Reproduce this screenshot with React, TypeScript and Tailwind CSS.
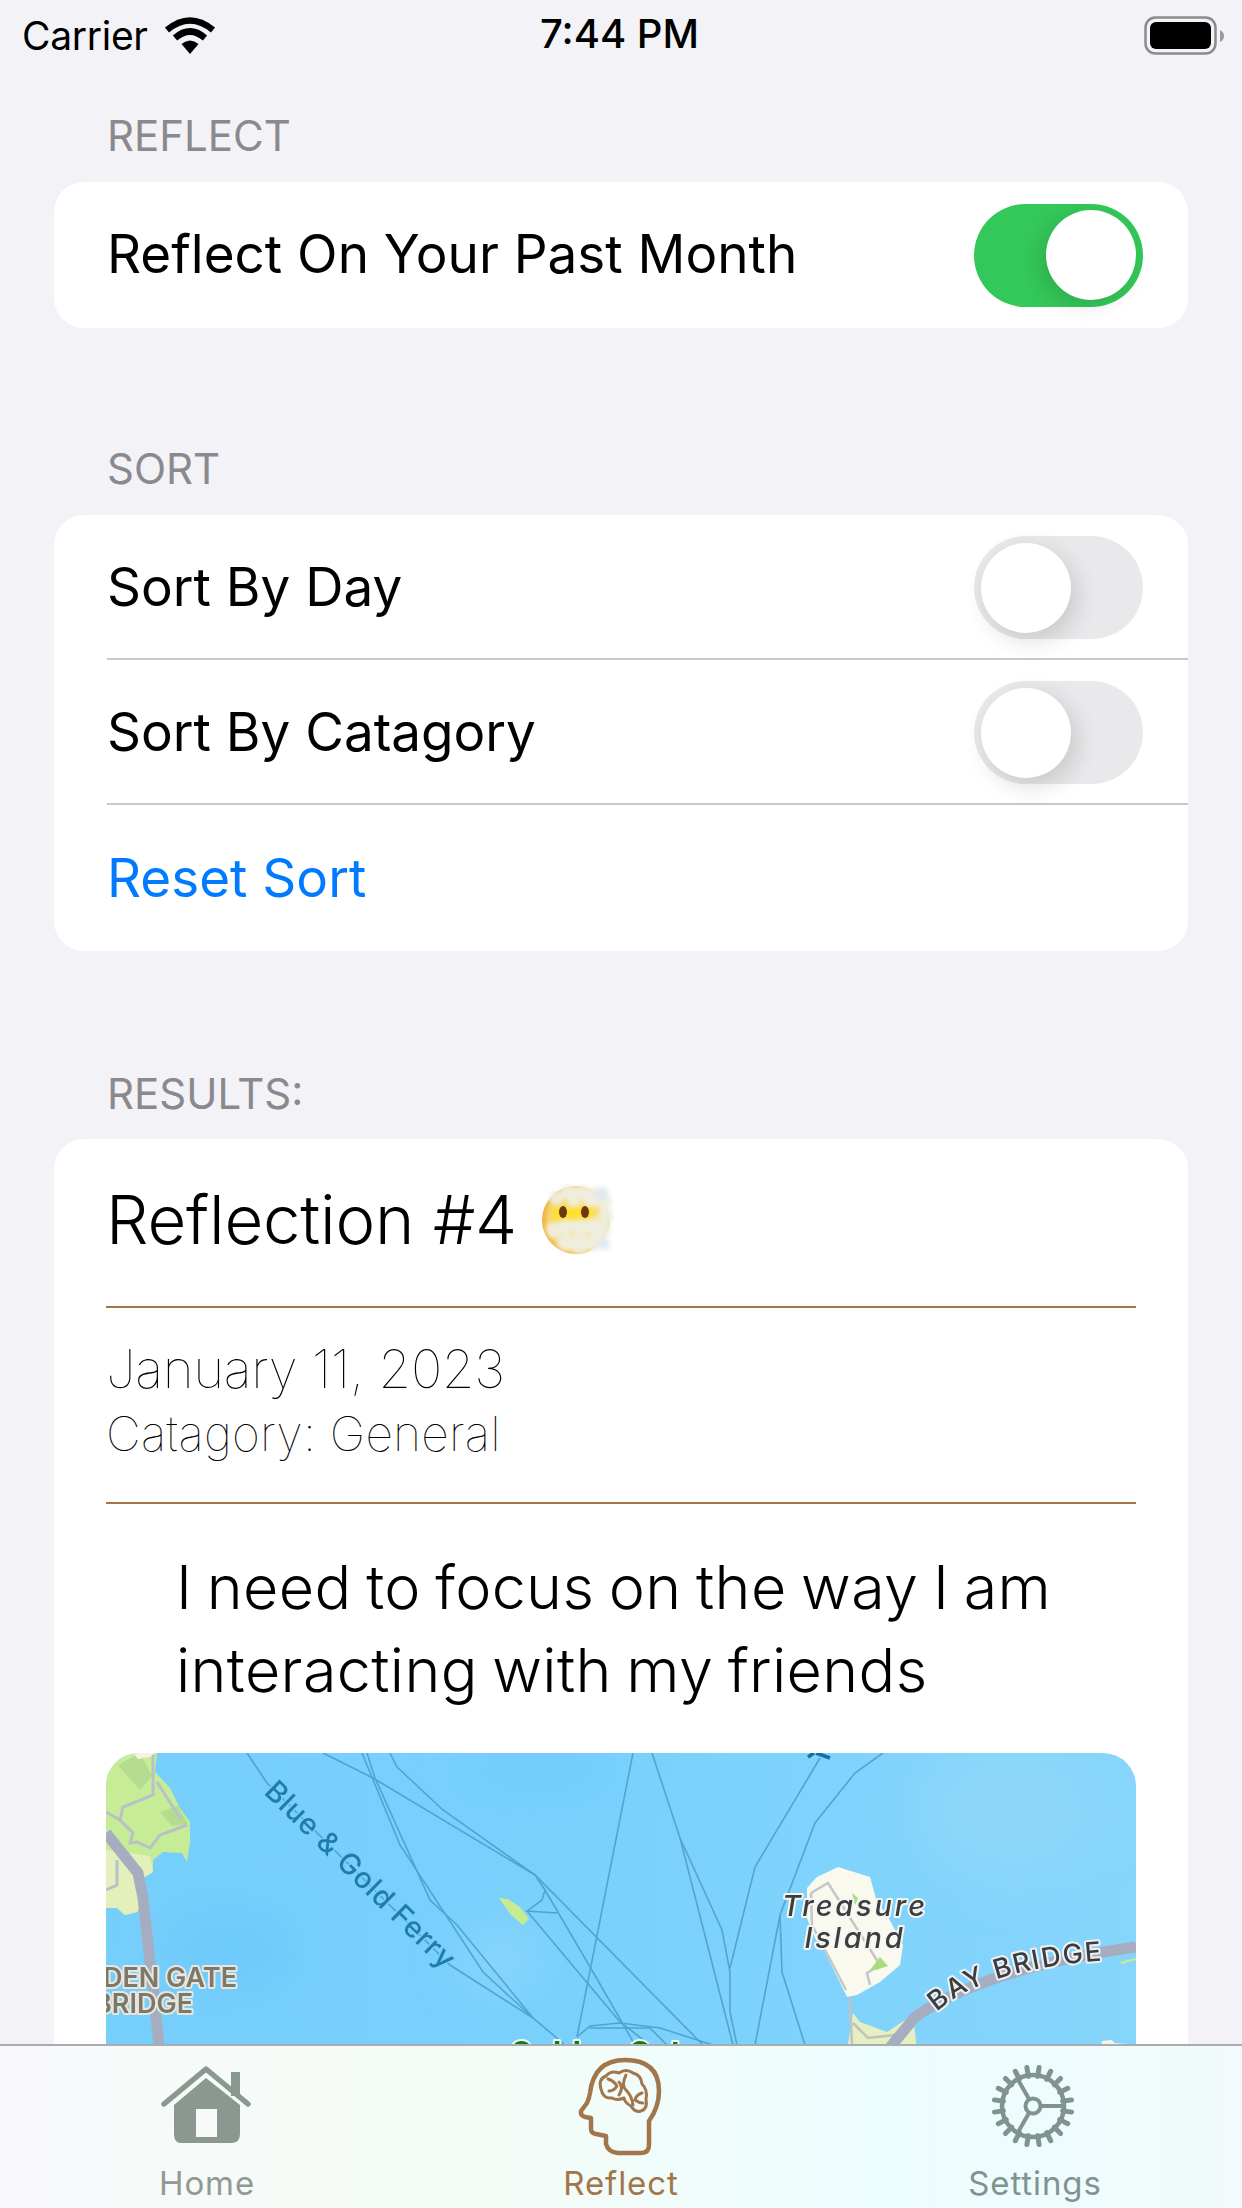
import React from "react";

function Toggle({ on }: { on: boolean }) {
  return (
    <div className={on ? "w-[169px] h-[103px] rounded-full bg-[#34c759] flex items-center justify-end px-[7px] shrink-0" : "w-[169px] h-[103px] rounded-full bg-[#e9e9eb] flex items-center justify-start px-[7px] shrink-0"}>
      <div className={on ? "w-[90px] h-[90px] rounded-full bg-white shadow-[-6px_6px_20px_rgba(0,0,0,0.12)]" : "w-[90px] h-[90px] rounded-full bg-white shadow-[6px_8px_24px_rgba(0,0,0,0.14)]"} />
    </div>
  );
}

function SectionLabel({ children, className }: { children: React.ReactNode; className: string }) {
  return <div className={"pl-[107px] h-[47px] leading-[47px] text-[42px] text-[#8a8a8e] " + className}>{children}</div>;
}

function Row({ label, last }: { label: string; last?: boolean }) {
  return (
    <div className={last ? "h-[146px] ml-[53px] pr-[45px] flex items-center justify-between" : "h-[145px] pt-[2px] ml-[53px] pr-[45px] flex items-center justify-between border-b-2 border-[#c9c9cb]"}>
      <span className="text-[53px] text-black">{label}</span>
      <Toggle on={label.startsWith("Reflect")} />
    </div>
  );
}

function WifiIcon() {
  return (
    <svg width="52" height="38" viewBox="0 0 52 38" className="ml-[16px]">
      <g fill="none" stroke="#000" strokeWidth="6.5">
        <path d="M3 13 Q26 -6 49 13" />
        <path d="M11 21 Q26 8 41 21" />
      </g>
      <path d="M17.5 27 Q26 20 34.500 27 L26 37 Z" fill="#000" />
    </svg>
  );
}

function BatteryIcon() {
  return (
    <svg width="84" height="40" viewBox="0 0 84 40">
      <rect x="1.500" y="1.500" width="70" height="36" rx="10" fill="none" stroke="#8c8c8e" strokeWidth="2.500" />
      <rect x="6" y="6" width="61" height="27" rx="6" fill="#000" />
      <path d="M76 14 Q80 16 80 20 Q80 24 76 26 Z" fill="#9a9a9c" />
    </svg>
  );
}

function CloudFace() {
  const puffs: [number, number, number][] = [
    [14, 14, 7], [26, 8, 8], [40, 9, 8], [52, 12, 9], [62, 18, 8], [64, 32, 8], [60, 46, 9], [52, 58, 9], [38, 60, 10], [24, 58, 9], [12, 46, 8], [24, 42, 8], [38, 44, 8], [50, 42, 8], [62, 60, 6], [60, 10, 7], [32, 18, 6], [48, 20, 6],
  ];
  return (
    <svg width="72" height="72" viewBox="0 0 72 72" className="ml-[25px] shrink-0">
      <defs>
        <radialGradient id="face" cx="0.55" cy="0.5" r="0.6">
          <stop offset="0" stopColor="#fbe98c" />
          <stop offset="0.75" stopColor="#f6d66a" />
          <stop offset="1" stopColor="#ec9a2c" />
        </radialGradient>
        <filter id="soft" x="-20%" y="-20%" width="140%" height="140%">
          <feGaussianBlur stdDeviation="2" />
        </filter>
      </defs>
      <circle cx="34" cy="36" r="34" fill="url(#face)" />
      <g filter="url(#soft)">
        {puffs.map(([x, y, r], i) => (
          <circle key={i} cx={x} cy={y} r={r} fill={i > 13 && i < 16 ? "#dfe8f0" : "#efefe4"} opacity={0.92} />
        ))}
      </g>
      <path d="M10 25 L52 23 L50 33 L12 36 Z" fill="#ffdf2e" filter="url(#soft)" />
      <ellipse cx="21" cy="28" rx="4" ry="6" fill="#6b3a10" />
      <ellipse cx="43" cy="28" rx="4" ry="6" fill="#6b3a10" />
    </svg>
  );
}

function MapView() {
  const lines = [
    "M247 1753L267 1783L450 1965L533 2018L565 2045",
    "M323 1753L373 1778L535 1875L703 2045",
    "M362 1753L400 1845L483 1972L533 2018",
    "M367 1753L375 1778L430 1900L457 1925L533 2018",
    "M390 1753L397 1767L443 1810L535 1875",
    "M535 1875L545 1890L593 1972L635 2045",
    "M545 1890L542 1900L527 1911L557 1913",
    "M527 1911L620 2022L650 2045",
    "M633 1753L577 2037",
    "M577 2037L590 2026L620 2023L660 2028L713 2045",
    "M590 2028L650 2028L667 2045",
    "M652 1753L680 1838L722 1930L730 1972L730 2012L737 2045",
    "M680 1838L733 2045",
    "M820 1758L755 1867L730 1968",
    "M883 1753L855 1773L815 1823L780 1915L755 2045",
    "M780 1915L782 1972L805 2045",
  ];
  return (
    <svg viewBox="106 1753 1030 500" className="block w-full h-full">
      <defs>
        <linearGradient id="water" x1="0" y1="0" x2="1" y2="0">
          <stop offset="0" stopColor="#76cefb" />
          <stop offset="0.5" stopColor="#7ad1fc" />
          <stop offset="1" stopColor="#86d5fb" />
        </linearGradient>
        <filter id="b20" x="-50%" y="-50%" width="200%" height="200%">
          <feGaussianBlur stdDeviation="22" />
        </filter>
        <filter id="b1" x="-10%" y="-10%" width="120%" height="120%">
          <feGaussianBlur stdDeviation="0.7" />
        </filter>
        <path id="bay" d="M937 2012 Q985 1968 1110 1960" />
      </defs>
      <rect x="106" y="1753" width="1030" height="500" fill="url(#water)" />
      <g filter="url(#b20)">
        <ellipse cx="230" cy="1950" rx="70" ry="45" fill="#6ecafb" />
        <ellipse cx="540" cy="1770" rx="80" ry="22" fill="#70ccfb" />
        <ellipse cx="1010" cy="1810" rx="90" ry="70" fill="#8cd7fa" />
        <ellipse cx="500" cy="1960" rx="40" ry="30" fill="#88d6fc" />
      </g>
      <g filter="url(#b1)">
        <g fill="none" stroke="#4a9cc9" strokeWidth="1.600" opacity="0.85">
          {lines.map((d, i) => (
            <path key={i} d={d} />
          ))}
        </g>
        <path d="M808 1757L814 1753M816 1753L830 1758" fill="none" stroke="#14709f" strokeWidth="3.500" />

        <path d="M133 1753L157 1753L155 1772L170 1788L180 1808L190 1822L190 1842L187 1862L182 1853L163 1852L153 1860L153 1872L143 1878L147 1895L137 1912L125 1915L117 1908L106 1908L106 1753Z" fill="#c7ec96" />
        <path d="M106 1850L150 1856L153 1872L143 1878L147 1895L137 1912L125 1915L117 1908L106 1908Z" fill="#e4f0bb" />
        <path d="M118 1765L140 1753L152 1776L140 1790Z" fill="#b3dc90" />
        <path d="M160 1812L178 1806L188 1824L172 1826Z" fill="#b3dc90" />
        <g fill="none" stroke="#b9c0c8" strokeWidth="3">
          <path d="M153 1753L153 1795L123 1807L120 1820L133 1833L130 1843L137 1842L150 1848L160 1835L187 1825" />
          <path d="M157 1782L180 1818" />
          <path d="M106 1812L120 1820" />
          <path d="M106 1890L117 1885L117 1860" />
        </g>
        <path d="M106 1833L138 1873L143 1898L159 2045" fill="none" stroke="#a7adc1" strokeWidth="11" />
        <path d="M133 1753L155 1753L150 1757L138 1759Z" fill="#f5f3df" />

        <path d="M838 1867L870 1877L877 1902L887 1915L903 1945L900 1965L880 1982L857 1995L847 1997L823 1948L815 1938L807 1918L807 1888L817 1877Z" fill="#f9f9ee" />
        <path d="M811 1893L828 1883L880 1965L867 1973L870 1985" fill="none" stroke="#c4c6c8" strokeWidth="2.500" />
        <path d="M811 1893L812 1925L846 1990" fill="none" stroke="#c4c6c8" strokeWidth="2.500" />
        <path d="M870 1970L880 1957L888 1966L876 1970L872 1970Z" fill="#a8dc7d" />
        <path d="M852 1893L855 1905L858 1898Z" fill="#a8dc7d" />
        <path d="M853 2013L860 2022L887 2032L913 2015L917 2050L847 2050Z" fill="#e6efbf" />
        <path d="M850 1997L852 2045M853 2023L868 2038L895 2035" fill="none" stroke="#bfc2c2" strokeWidth="2.500" />
        <path d="M888 2050L915 2017Q985 1968 1136 1947" fill="none" stroke="#a7adc1" strokeWidth="11" />
        <path d="M1122 1964L1136 1960L1136 1958L1120 1962Z" fill="#c7ec96" />
        <path d="M1100 2050L1102 2041L1112 2040L1114 2043L1127 2044L1127 2050Z" fill="#f7f6e4" />
        <path d="M499 1898L508 1899L520 1907L529 1919L523 1925L511 1915Z" fill="#c8eb91" />

        <g strokeLinejoin="round" fontFamily="Inter, sans-serif">
          <text x="263" y="1793" transform="rotate(44.500 263 1793)" fontSize="29" fontWeight="500" fill="#1c7db2" stroke="#7dcdf5" strokeWidth="3" letterSpacing="0.800" style={{ paintOrder: "stroke" }}>Blue &amp; Gold Ferry</text>
          <text x="237" y="1987" textAnchor="end" fontSize="27" fontWeight="600" fill="#7c786a" stroke="#e8e6df" strokeWidth="4" style={{ paintOrder: "stroke" }}>GOLDEN GATE</text>
          <text x="193" y="2013" textAnchor="end" fontSize="27" fontWeight="600" fill="#7c786a" stroke="#e8e6df" strokeWidth="4" style={{ paintOrder: "stroke" }}>BRIDGE</text>
          <text x="855" y="1916" textAnchor="middle" fontSize="29" fontStyle="italic" fontWeight="500" letterSpacing="2.800" fill="#3c3c3e" stroke="#f4f6f4" strokeWidth="4" style={{ paintOrder: "stroke" }}>Treasure</text>
          <text x="855" y="1948" textAnchor="middle" fontSize="29" fontStyle="italic" fontWeight="500" letterSpacing="2.800" fill="#3c3c3e" stroke="#f4f6f4" strokeWidth="4" style={{ paintOrder: "stroke" }}>Island</text>
          <text fontSize="27" fontWeight="500" letterSpacing="1.800" fill="#3c3c3e" stroke="#eef0f4" strokeWidth="4" style={{ paintOrder: "stroke" }}>
            <textPath href="#bay">BAY BRIDGE</textPath>
          </text>
          <text x="510" y="2063" fontSize="30" fontWeight="700" letterSpacing="1" fill="#0b7d14" stroke="#f2f6ee" strokeWidth="4" style={{ paintOrder: "stroke" }}>Golden Gate</text>
        </g>
      </g>
    </svg>
  );
}

function HomeIcon() {
  return (
    <svg width="100" height="90" viewBox="0 0 100 90" fill="#8b9890" className="translate-x-[4px] -translate-y-[3px]">
      <path d="M3 46L45 11L87 46" fill="none" stroke="#8b9890" strokeWidth="5.500" strokeLinecap="round" strokeLinejoin="round" />
      <rect x="70" y="14" width="9" height="24" />
      <path fillRule="evenodd" d="M45 20L79 47L79 76Q79 85 70 85L20 85Q13 85 13 76L13 47ZM35 51L35 79L56 79L56 51Z" />
    </svg>
  );
}

function BrainIcon() {
  return (
    <svg width="120" height="120" viewBox="0 0 120 120" fill="none" stroke="#a2764b" strokeLinejoin="round" strokeLinecap="round" className="translate-y-[3px]">
      <path strokeWidth="4.500" d="M45 87L45 95Q47 103 57 104L80 104Q88 104 88 96L88 72Q98 58 98 42Q98 11 64 11Q33 11 29 44Q28 50 26 54L20 62Q19 66 24 68L30 69L30 80Q30 84 35 85Z" />
      <path strokeWidth="3" d="M40 40Q37 30 45 27Q50 21 58 24Q65 19 72 24Q80 26 81 35Q87 41 85 50Q87 60 80 62Q74 64 70 57Q64 54 63 49Q56 52 51 49Q42 50 40 40Z" />
      <path strokeWidth="3" d="M47 30Q53 32 56 37Q53 42 48 42M65 26Q60 36 65 41Q71 47 72 56M81 44Q75 46 74 51Q78 54 82 54M58 33Q63 38 58 46" />
    </svg>
  );
}

function GearIcon() {
  const teeth = Array.from({ length: 20 }, (_, i) => {
    const a = ((i + 0.5) * Math.PI * 2) / 20;
    return { x1: 62 + 30 * Math.cos(a), y1: 52 + 30 * Math.sin(a), x2: 62 + 39 * Math.cos(a), y2: 52 + 39 * Math.sin(a) };
  });
  return (
    <svg width="120" height="104" viewBox="0 0 120 104" fill="none" stroke="#7f9490" className="-translate-x-[4px]">
      <circle cx="62" cy="52" r="31" strokeWidth="4.500" />
      {teeth.map((t, i) => (
        <line key={i} x1={t.x1} y1={t.y1} x2={t.x2} y2={t.y2} strokeWidth="5" strokeLinecap="round" />
      ))}
      <circle cx="62" cy="52" r="7.500" strokeWidth="4" />
      <path strokeWidth="4" d="M70 52L93 52M58 45L46 24M58 59L46 80" />
    </svg>
  );
}

function Tab({ label, color, icon }: { label: string; color: string; icon: React.ReactNode }) {
  return (
    <div className="flex flex-col items-center">
      <div className="h-[108px] flex items-center justify-center">{icon}</div>
      <div className={"mt-[4px] text-[33px] leading-[38px] tracking-[0.9px] " + color}>{label}</div>
    </div>
  );
}

export default function App() {
  return (
    <div className="relative w-[1242px] h-[2208px] overflow-hidden bg-[#f2f2f7] font-['Inter',sans-serif] text-black">
      <div className="relative h-[60px] pt-[12px] pl-[22px] pr-[14px] flex items-center justify-between">
        <div className="flex items-center">
          <span className="text-[39px] leading-[44px] tracking-[-0.3px]">Carrier</span>
          <WifiIcon />
        </div>
        <BatteryIcon />
        <div className="absolute left-[540px] top-[11px] text-[40px] leading-[46px] font-medium">7:44 PM</div>
      </div>

      <SectionLabel className="mt-[52px] mb-[23px]">REFLECT</SectionLabel>
      <div className="mx-[54px] bg-white rounded-[30px]">
        <Row label="Reflect On Your Past Month" last />
      </div>

      <SectionLabel className="mt-[117px] mb-[23px]">SORT</SectionLabel>
      <div className="mx-[54px] bg-white rounded-[30px]">
        <Row label="Sort By Day" />
        <Row label="Sort By Catagory" />
        <div className="h-[146px] pt-[2px] ml-[53px] flex items-center text-[53px] text-[#007aff]">Reset Sort</div>
      </div>

      <SectionLabel className="mt-[119px] mb-[22px]">RESULTS:</SectionLabel>
      <div className="mx-[54px] bg-white rounded-t-[30px] px-[52px] pt-[41px]">
        <div className="h-[80px] flex items-center">
          <span className="text-[67px] leading-[80px] font-light tracking-[-0.2px]">Reflection #4</span>
          <CloudFace />
        </div>
        <div className="mt-[46px] border-t-2 border-[#a2764b]" />
        <div className="mt-[31px] text-[53px] leading-[60px] font-thin tracking-[-0.4px]">January 11, 2023</div>
        <div className="mt-[8px] text-[48px] leading-[54px] font-thin tracking-[0.2px]">Catagory: General</div>
        <div className="mt-[41px] border-t-2 border-[#a2764b]" />
        <div className="mt-[42px] pl-[70px] text-[61px] leading-[83px] font-light tracking-[0.36px] [word-spacing:-3px]">
          I need to focus on the way I am
          <br />
          interacting with my friends
        </div>
        <div className="mt-[41px] h-[500px] rounded-[33px] overflow-hidden">
          <MapView />
        </div>
      </div>

      <div className="absolute left-0 right-0 bottom-0 h-[164px] border-t-2 border-[#a9adb0] bg-[linear-gradient(90deg,#f8f8fb_0%,#f5fcf6_35%,#ecfdfe_72%,#f2fafb_100%)] grid grid-cols-3 pt-[6px]">
        <Tab label="Home" color="text-[#8e9a92]" icon={<HomeIcon />} />
        <Tab label="Reflect" color="text-[#a2764b]" icon={<BrainIcon />} />
        <Tab label="Settings" color="text-[#7f9490]" icon={<GearIcon />} />
      </div>
    </div>
  );
}
